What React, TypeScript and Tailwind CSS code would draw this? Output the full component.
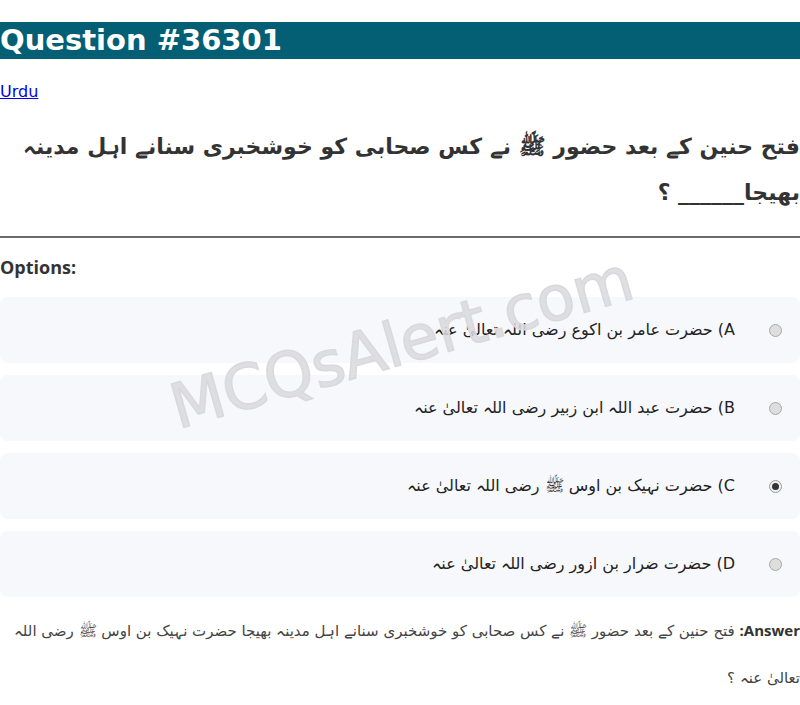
import React from "react";

const options = [
  { key: "A", text: "حضرت عامر بن اکوع رضی اللہ تعالیٰ عنہ", checked: false },
  { key: "B", text: "حضرت عبد اللہ ابن زبیر رضی اللہ تعالیٰ عنہ", checked: false },
  { key: "C", text: "حضرت نہیک بن اوس ﷺ رضی اللہ تعالیٰ عنہ", checked: true },
  { key: "D", text: "حضرت ضرار بن ازور رضی اللہ تعالیٰ عنہ", checked: false },
];

function Radio({ checked }: { checked: boolean }) {
  if (checked) {
    return (
      <span className="flex h-[13px] w-[13px] shrink-0 items-center justify-center rounded-full border border-[#9a9a9a] bg-[#f0f0f0]">
        <span className="h-[7px] w-[7px] rounded-full bg-[#333]"></span>
      </span>
    );
  }
  return <span className="h-[13px] w-[13px] shrink-0 rounded-full border border-[#a8a8a8] bg-[#dedede]"></span>;
}

export default function App() {
  return (
    <div className="relative min-h-[705px] bg-white font-['DejaVu_Sans',sans-serif] text-[#333]">
      {/* watermark */}
      <div className="pointer-events-none absolute left-0 right-0 top-[312px] z-10 flex justify-center">
        <span className="ml-[4px] -rotate-[16deg] font-['DejaVu_Sans',sans-serif] text-[62px] font-normal leading-none text-[#d9d9dd]/85 [-webkit-text-stroke:1.5px_#d9d9dd]">
          MCQsAlert.com
        </span>
      </div>

      <div className="pt-[22px]">
        <h1 className="bg-[#045f74] text-[29px] font-bold leading-[37px] text-white">Question #36301</h1>
      </div>

      <div className="mt-[23px] text-[16px] leading-[19px]">
        <a href="#" className="text-[#0000ee] underline">
          Urdu
        </a>
      </div>

      <p dir="rtl" className="mt-[23px] text-[22px] font-bold leading-[46px] text-[#333]">
        فتح حنین کے بعد حضور ﷺ نے کس صحابی کو خوشخبری سنانے اہل مدینہ بھیجا______ ؟
      </p>

      <hr className="mt-[20px] border-t-2 border-[#6b6b6b]" />

      <div className="mt-[18px] font-['Open_Sans',sans-serif] text-[18px] font-bold leading-[22px] text-[#333]">Options:</div>

      <div className="mt-[19px] flex flex-col gap-[12px]">
        {options.map((o) => (
          <div key={o.key} dir="rtl" className="flex h-[66px] items-center gap-[34px] rounded-lg bg-[#f7f8fc] pr-[18px]">
            <Radio checked={o.checked} />
            <span className="text-[16px] text-[#222]">
              {o.key}) {o.text}
            </span>
          </div>
        ))}
      </div>

      <p dir="rtl" className="mt-[10px] pl-[12px] text-[15px] leading-[47px] text-[#444]">
        <b className="font-['Open_Sans',sans-serif] text-[#333]">Answer:</b> فتح حنین کے بعد حضور ﷺ نے کس صحابی کو خوشخبری سنانے اہل مدینہ بھیجا حضرت نہیک بن اوس ﷺ رضی اللہ تعالیٰ عنہ ؟
      </p>
    </div>
  );
}
